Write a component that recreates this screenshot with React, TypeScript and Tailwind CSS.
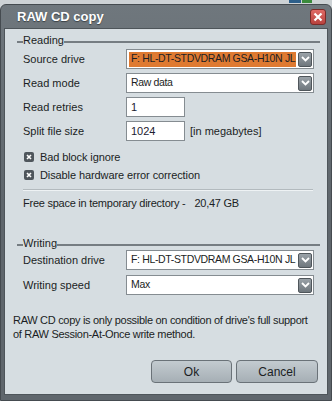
import React from "react";

function Arrow() {
  return (
    <div className="w-[14px] h-[15px] shrink-0 rounded-[2px] border border-[#4f565b] bg-gradient-to-b from-[#9aa2a8] to-[#6f777d] flex items-center justify-center">
      <svg width="9" height="6" viewBox="0 0 9 6">
        <path d="M1 1 L4.5 4.5 L8 1" fill="none" stroke="#ffffff" strokeWidth="1.8" />
      </svg>
    </div>
  );
}

function Select({ value, highlight }: { value: string; highlight?: boolean }) {
  return (
    <div className="w-[188px] h-[20px] bg-white border border-[#858c91] flex items-center pl-[2px] pr-[1px] gap-[2px]">
      <div
        className={`flex-1 h-[15px] flex items-center px-[2px] overflow-hidden whitespace-nowrap text-[10.5px] tracking-[-0.35px] ${
          highlight ? "bg-[#df7a31]" : ""
        }`}
      >
        {value}
      </div>
      <Arrow />
    </div>
  );
}

function Input({ value }: { value: string }) {
  return (
    <div className="w-[59px] h-[20px] bg-white border border-[#858c91] flex items-center px-[4px] text-[#1c2030]">
      {value}
    </div>
  );
}

function Checkbox({ label }: { label: string }) {
  return (
    <div className="h-[16px] flex items-center gap-[6px] pl-[1px]">
      <div className="w-[10px] h-[10px] rounded-[2px] bg-[#4f565c] flex items-center justify-center">
        <svg width="6" height="6" viewBox="0 0 6 6">
          <path d="M1 1 L5 5 M5 1 L1 5" stroke="#ffffff" strokeWidth="1.6" />
        </svg>
      </div>
      <span className="tracking-[-0.1px]">{label}</span>
    </div>
  );
}

function GroupHeader({ title }: { title: string }) {
  return (
    <div className="h-[14px] flex items-center pl-[12px] pr-[7px]">
      <div className="w-[6px] h-[2px] bg-[#767d82] mt-[3px]" />
      <span className="leading-[14px]">{title}</span>
      <div className="flex-1 h-[2px] bg-[#767d82] mt-[3px]" />
    </div>
  );
}

function Row({ label, children }: { label: string; children: React.ReactNode }) {
  return (
    <div className="h-[20px] flex items-center pl-[18px]">
      <div className="w-[103px]">{label}</div>
      {children}
    </div>
  );
}

export default function App() {
  return (
    <div className="w-[332px] h-[401px] bg-[#cdd2d5] overflow-hidden font-['Liberation_Sans',Arial,sans-serif] text-[11px] text-[#1b1e24]">
      {/* desktop strip */}
      <div className="h-[4px] flex justify-end pr-[20px]">
        <div className="w-[12px] h-[3px] bg-[#2d5f8a]" />
        <div className="w-[1px] h-[3px]" />
        <div className="w-[10px] h-[3px] bg-[#3a8a3c]" />
      </div>

      <div className="h-[397px] rounded-t-[6px] bg-gradient-to-b from-[#6f777d] via-[#5f666c] to-[#5f666c] border border-[#454b50] flex flex-col px-[3px] pb-[5px]">
        {/* title bar */}
        <div className="h-[23px] shrink-0 flex items-center justify-between pl-[13px] pr-[2px]">
          <span className="text-white font-bold text-[13px] [text-shadow:0_1px_1px_#3a4045]">RAW CD copy</span>
          <div className="w-[16px] h-[16px] rounded-[3px] bg-gradient-to-b from-[#e06a66] to-[#b8423e] border border-[#7a2a28] flex items-center justify-center">
            <svg width="10" height="10" viewBox="0 0 10 10">
              <path d="M1.5 1.5 L8.5 8.5 M8.5 1.5 L1.5 8.5" stroke="#ffffff" strokeWidth="2.2" />
            </svg>
          </div>
        </div>

        {/* client */}
        <div className="flex-1 bg-[#d6dde1] border border-[#4e555a] flex flex-col pt-[4px]">
          <GroupHeader title="Reading" />
          <div className="mt-[2px] flex flex-col gap-[4px]">
            <Row label="Source drive">
              <Select value="F: HL-DT-STDVDRAM GSA-H10N JL" highlight />
            </Row>
            <Row label="Read mode">
              <Select value="Raw data" />
            </Row>
            <Row label="Read retries">
              <Input value="1" />
            </Row>
            <Row label="Split file size">
              <Input value="1024" />
              <span className="ml-[5px]">[in megabytes]</span>
            </Row>
          </div>

          <div className="mt-[8px] pl-[18px] flex flex-col gap-[2px]">
            <Checkbox label="Bad block ignore" />
            <Checkbox label="Disable hardware error correction" />
          </div>

          <div className="mt-[6px] ml-[18px] mr-[14px] h-[1px] bg-[#b3babe] border-b border-[#eef2f4] box-content" />

          <div className="mt-[4px] h-[16px] flex items-center pl-[18px] tracking-[-0.25px]">
            <span>Free space in temporary directory -</span>
            <span className="ml-[9px]">20,47 GB</span>
          </div>

          <div className="mt-[25px]">
            <GroupHeader title="Writing" />
          </div>
          <div className="flex flex-col gap-[5px]">
            <Row label="Destination drive">
              <Select value="F: HL-DT-STDVDRAM GSA-H10N JL" />
            </Row>
            <Row label="Writing speed">
              <Select value="Max" />
            </Row>
          </div>

          <p className="mt-[18px] pl-[8px] pr-[12px] leading-[14px] tracking-[-0.3px]">
            RAW CD copy is only possible on condition of drive's full support of RAW Session-At-Once write method.
          </p>

          <div className="mt-[19px] flex justify-end gap-[4px] pr-[9px]">
            <button className="w-[81px] h-[23px] rounded-[4px] border border-[#6a7278] bg-gradient-to-b from-[#c3cbd0] to-[#a6afb5] text-[12px] text-[#1b1e24]">
              Ok
            </button>
            <button className="w-[82px] h-[23px] rounded-[4px] border border-[#6a7278] bg-gradient-to-b from-[#c3cbd0] to-[#a6afb5] text-[12px] text-[#1b1e24]">
              Cancel
            </button>
          </div>
        </div>
      </div>
    </div>
  );
}
